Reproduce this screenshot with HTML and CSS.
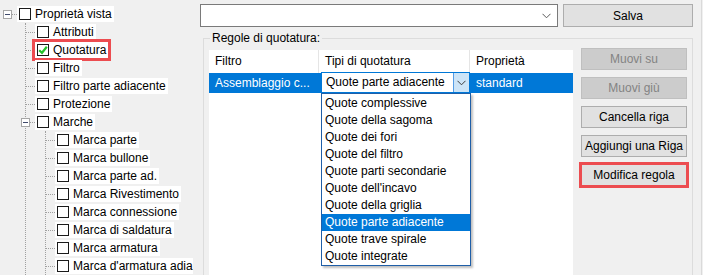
FILE: index.html
```html
<!DOCTYPE html>
<html lang="it">
<head>
<meta charset="utf-8">
<title>Regole di quotatura</title>
<link rel="stylesheet" href="styles.css">
</head>
<body>
<div class="app">
  <div class="tree">
    <div class="row">
      <span class="exp"><span class="minus"></span></span><span class="hl hl-s"></span>
      <span class="lbl"><span class="cb"></span>Proprietà vista</span>
    </div>
    <div class="kids k0">
      <div class="row"><span class="hl"></span><span class="lbl"><span class="cb"></span>Attributi</span></div>
      <div class="row"><span class="hl"></span><span class="lbl mark"><span class="cb"><svg width="10" height="10" viewBox="0 0 10 10"><path d="M1.2 5.2 L4 7.8 L8.8 1.8" fill="none" stroke="#21c42a" stroke-width="2.2"/></svg></span>Quotatura</span></div>
      <div class="row"><span class="hl"></span><span class="lbl"><span class="cb"></span>Filtro</span></div>
      <div class="row"><span class="hl"></span><span class="lbl"><span class="cb"></span>Filtro parte adiacente</span></div>
      <div class="row"><span class="hl"></span><span class="lbl"><span class="cb"></span>Protezione</span></div>
      <div class="row"><span class="exp exp-in"><span class="minus"></span></span><span class="hl hl-s"></span><span class="lbl"><span class="cb"></span>Marche</span></div>
      <div class="kids k1">
        <div class="row"><span class="hl"></span><span class="lbl"><span class="cb"></span>Marca parte</span></div>
        <div class="row"><span class="hl"></span><span class="lbl"><span class="cb"></span>Marca bullone</span></div>
        <div class="row"><span class="hl"></span><span class="lbl"><span class="cb"></span>Marca parte ad.</span></div>
        <div class="row"><span class="hl"></span><span class="lbl"><span class="cb"></span>Marca Rivestimento</span></div>
        <div class="row"><span class="hl"></span><span class="lbl"><span class="cb"></span>Marca connessione</span></div>
        <div class="row"><span class="hl"></span><span class="lbl"><span class="cb"></span>Marca di saldatura</span></div>
        <div class="row"><span class="hl"></span><span class="lbl"><span class="cb"></span>Marca armatura</span></div>
        <div class="row"><span class="hl"></span><span class="lbl"><span class="cb"></span>Marca d'armatura adia</span></div>
      </div>
    </div>
  </div>

  <div class="main">
    <div class="toprow">
      <div class="combo">
        <svg class="chev" width="9" height="6" viewBox="0 0 9 6"><path d="M0.5 0.8 L4.5 4.8 L8.5 0.8" fill="none" stroke="#5a5a5a" stroke-width="1"/></svg>
      </div>
      <div class="btn salva">Salva</div>
    </div>

    <fieldset class="group">
      <legend>Regole di quotatura:</legend>
      <div class="gbody">
        <div class="grid">
          <div class="grow head">
            <div class="cell">Filtro</div>
            <div class="cell">Tipi di quotatura</div>
            <div class="cell last">Proprietà</div>
          </div>
          <div class="grow sel">
            <div class="cell">Assemblaggio c...</div>
            <div class="cell edit">
              <div class="cellcombo">
                <span class="cc-text">Quote parte adiacente</span>
                <span class="cc-btn"><svg width="9" height="6" viewBox="0 0 9 6"><path d="M0.5 0.8 L4.5 4.8 L8.5 0.8" fill="none" stroke="#3c3c3c" stroke-width="1"/></svg></span>
                <div class="drop">
                  <div class="opt">Quote complessive</div>
                  <div class="opt">Quote della sagoma</div>
                  <div class="opt">Quote dei fori</div>
                  <div class="opt">Quote del filtro</div>
                  <div class="opt">Quote parti secondarie</div>
                  <div class="opt">Quote dell'incavo</div>
                  <div class="opt">Quote della griglia</div>
                  <div class="opt on">Quote parte adiacente</div>
                  <div class="opt">Quote trave spirale</div>
                  <div class="opt">Quote integrate</div>
                </div>
              </div>
            </div>
            <div class="cell last">standard</div>
          </div>
        </div>
        <div class="btns">
          <div class="btn dis">Muovi su</div>
          <div class="btn dis">Muovi giù</div>
          <div class="btn">Cancella riga</div>
          <div class="btn">Aggiungi una Riga</div>
          <div class="btn mark-btn">Modifica regola</div>
        </div>
      </div>
    </fieldset>
  </div>
</div>
</body>
</html>
```

FILE: styles.css
```css
* { box-sizing: border-box; }

html, body {
  margin: 0;
  padding: 0;
  background: #f0f0f0;
}

body {
  font-family: "Liberation Sans", Arial, sans-serif;
  font-size: 12px;
  color: #000;
}

.app {
  display: flex;
  width: 702px;
  height: 275px;
  overflow: hidden;
  border-right: 1px solid #dadada;
}

/* ---------- tree ---------- */
.tree {
  width: 193px;
  flex: 0 0 193px;
  overflow: hidden;
  padding: 5px 0 0 3px;
  white-space: nowrap;
}

.row {
  display: flex;
  align-items: center;
  height: 18px;
}

.exp {
  flex: 0 0 9px;
  width: 9px;
  height: 9px;
  border: 1px solid #a6a6a6;
  background: #fff;
  display: flex;
  align-items: center;
  justify-content: center;
}

.exp-in {
  margin-left: -5px;
}

.minus {
  width: 5px;
  height: 1px;
  background: #3f4a6b;
}

.hl {
  flex: 0 0 9px;
  width: 9px;
  height: 1px;
  border-top: 1px dotted #a0a0a0;
}

.hl-s {
  flex-basis: 5px;
  width: 5px;
}

.lbl {
  display: flex;
  align-items: center;
  height: 16px;
  line-height: 16px;
  background: #fff;
  padding: 0 2px 0 2px;
}

.cb {
  width: 12px;
  height: 12px;
  border: 1px solid #1a1a1a;
  background: #fff;
  margin-right: 4px;
  display: flex;
  align-items: center;
  justify-content: center;
}

.mark {
  outline: 3px solid #ec4c50;
  outline-offset: 0;
}

.kids {
  border-left: 1px dotted #a0a0a0;
}

.k0 { margin-left: 22px; }
.k1 { margin-left: 19px; }

/* ---------- main ---------- */
.main {
  flex: 1;
  margin-left: 7px;
  padding: 4px 8px 0 0;
  display: flex;
  flex-direction: column;
  min-width: 0;
}

.toprow {
  display: flex;
  gap: 5px;
  height: 23px;
}

.combo {
  width: 358px;
  height: 23px;
  background: #fff;
  border: 1px solid #7a7a7a;
  display: flex;
  align-items: center;
  justify-content: flex-end;
  padding-right: 6px;
}

.btn {
  height: 22px;
  background: #e1e1e1;
  border: 1px solid #adadad;
  display: flex;
  align-items: center;
  justify-content: center;
  white-space: nowrap;
}

.salva {
  width: 130px;
  height: 23px;
}

.group {
  margin: 4px 0 0 3px;
  padding: 4px 4px 0 5px;
  border: 1px solid #dcdcdc;
  border-bottom: none;
  min-width: 0;
}

.group legend {
  padding: 0 2px;
  margin-left: 1px;
  line-height: 15px;
  height: 15px;
}

.gbody {
  display: flex;
  height: 225px;
}

.grid {
  width: 364px;
  flex: 0 0 364px;
  background: #fff;
}

.grow {
  display: grid;
  grid-template-columns: 110px 151px 1fr;
}

.head {
  height: 23px;
}

.head .cell {
  border-right: 1px solid #e5e5e5;
  line-height: 23px;
}

.head .cell.last {
  border-right: none;
}

.cell {
  padding-left: 6px;
  white-space: nowrap;
}

.sel {
  height: 20px;
  background: #0078d7;
  color: #fff;
  line-height: 20px;
}

.cell.edit {
  padding-left: 2px;
}

.cellcombo {
  position: relative;
  margin-top: -1px;
  width: 149px;
  height: 21px;
  background: #fff;
  border: 1px solid #0078d7;
  color: #000;
  display: flex;
  align-items: center;
}

.cc-text {
  flex: 1;
  padding-left: 4px;
  line-height: 19px;
}

.cc-btn {
  width: 16px;
  height: 19px;
  background: #cce4f7;
  border-left: 1px solid #569de5;
  display: flex;
  align-items: center;
  justify-content: center;
}

.drop {
  position: absolute;
  left: -1px;
  top: 20px;
  width: 150px;
  padding-top: 1px;
  background: #fff;
  border: 1px solid #1f5fa8;
  box-shadow: 2px 2px 2px rgba(0, 0, 0, 0.25);
  z-index: 5;
}

.opt {
  height: 17px;
  line-height: 17px;
  padding-left: 3px;
  white-space: nowrap;
}

.opt.on {
  background: #0078d7;
  color: #fff;
}

.btns {
  width: 106px;
  flex: 0 0 106px;
  margin-left: 8px;
  margin-top: -2px;
  display: flex;
  flex-direction: column;
  gap: 7px;
}

.btn.dis {
  background: #cccccc;
  border-color: #bfbfbf;
  color: #838383;
}

.mark-btn {
  outline: 3px solid #ec4c50;
  outline-offset: -1px;
}
```
